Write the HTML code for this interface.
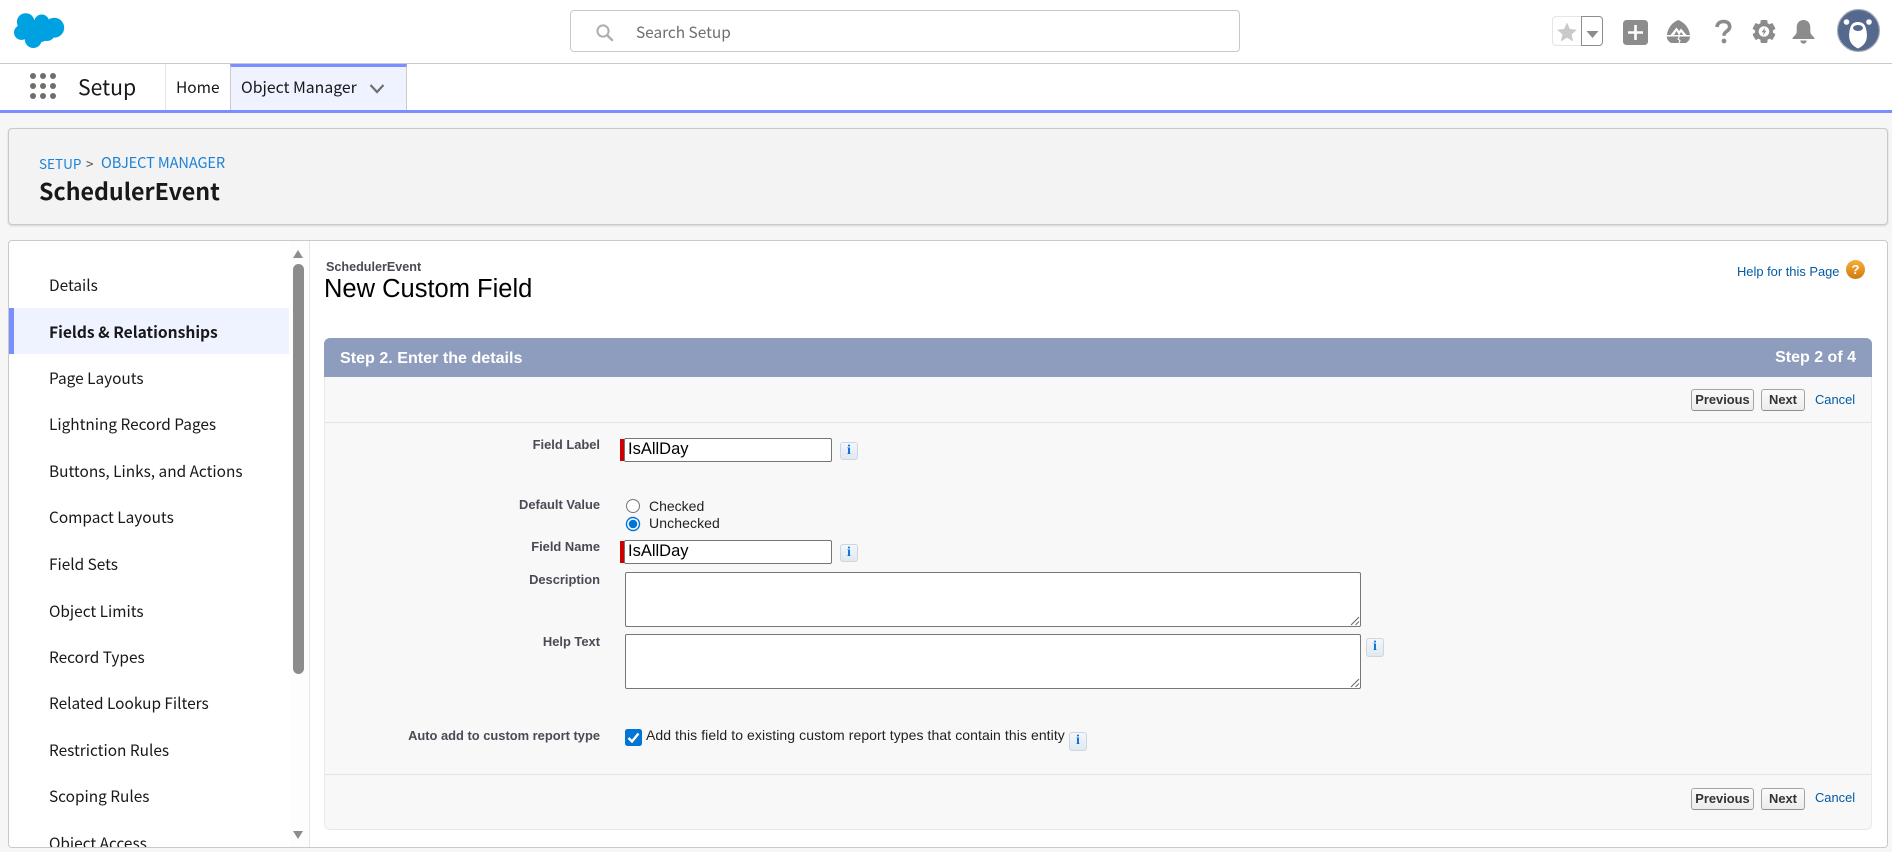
<!DOCTYPE html>
<html lang="en"><head><meta charset="utf-8"><title>SchedulerEvent - New Custom Field</title>
<style>
html,body{margin:0;padding:0;width:1892px;height:852px;overflow:hidden;background:#f6f6f6}
body{position:relative;font-family:"Liberation Sans",Arial,sans-serif}
.a{position:absolute;white-space:nowrap}
.n{font-family:"Noto Sans CJK SC","Liberation Sans",sans-serif}
.nv{left:49px;font-size:15.4px;line-height:24px;color:#181818;font-family:"Noto Sans CJK SC","Liberation Sans",sans-serif}
.lb{right:1292px;font-size:12.9px;line-height:16px;font-weight:bold;color:#4a4a56;text-align:right}
.inp{background:#fff;border:1px solid #767676;border-radius:2px;box-sizing:border-box}
.red{background:#c00;width:4px;height:22px;left:620px}
.tx{font-size:16.5px;line-height:20px;color:#000;left:628px}
.ib{box-sizing:border-box;width:18px;height:18px;background:linear-gradient(#f4f7fb,#dfe8f1);border:1px solid #cfd6dc;border-radius:3px;color:#0f74d8;font:bold 14px/16px "Liberation Serif",serif;text-align:center}
.btn{box-sizing:border-box;height:22px;background:linear-gradient(#fbfbfb,#ececec);border:1px solid #a5a5a5;border-bottom-color:#8f8f8f;border-radius:3px;font-size:12.9px;font-weight:bold;line-height:20px;color:#333;text-align:center}
.lnk{font-size:12.9px;line-height:16px;color:#015ba7}
.rt{font-size:14px;line-height:16px;color:#222}
</style></head><body>

<!-- top header -->
<div class="a" style="left:0;top:0;width:1892px;height:64px;background:#fff;border-bottom:1px solid #c9c9c9;box-sizing:border-box"></div>
<svg class="a" style="left:0;top:0" width="80" height="60" viewBox="0 0 80 60"><g fill="#00a1e0"><circle cx="25.7" cy="22" r="8.800"/><circle cx="41.7" cy="22" r="7.500"/><circle cx="54.3" cy="27.7" r="9.900"/><circle cx="33.3" cy="39.500" r="8.500"/><circle cx="21.500" cy="32.500" r="7.500"/><circle cx="37" cy="30" r="10"/><circle cx="46.7" cy="32" r="9"/><circle cx="29" cy="30" r="9"/><circle cx="41" cy="36" r="6"/></g></svg>

<div class="a" style="left:570px;top:10px;width:670px;height:42px;box-sizing:border-box;background:#fff;border:1px solid #c9c9c9;border-radius:4px"></div>
<svg class="a" style="left:595px;top:23px" width="19" height="19" viewBox="0 0 19 19"><circle cx="8" cy="8" r="5.6" fill="none" stroke="#b0adab" stroke-width="2"/><path d="M12 12l5 5" stroke="#b0adab" stroke-width="2.4" stroke-linecap="round"/></svg>
<div class="a n" style="left:636px;top:21px;font-size:15.4px;line-height:22px;color:#706e6b">Search Setup</div>

<!-- header icons -->
<div class="a" style="left:1552px;top:16px;width:30px;height:30px;box-sizing:border-box;border:1px solid #e5e5e5;border-right:0;border-radius:4px 0 0 4px;background:#fff"></div>
<div class="a" style="left:1581px;top:16px;width:22px;height:30px;box-sizing:border-box;border:1px solid #8c8c8c;border-radius:0 4px 4px 0;background:#fff"></div>
<svg class="a" style="left:1556px;top:21px" width="22" height="22" viewBox="0 0 22 22"><path d="M11 1.5l2.900 6.500 7 .7-5.300 4.700 1.600 7L11 16.800l-6.200 3.600 1.600-7L1.100 8.700l7-.7z" fill="#c9c9c9"/></svg>
<svg class="a" style="left:1586px;top:31px" width="13" height="7" viewBox="0 0 13 7"><path d="M.5 0h12l-6 7z" fill="#8c8c8c"/></svg>
<svg class="a" style="left:1623px;top:20px" width="25" height="25" viewBox="0 0 25 25"><rect width="25" height="25" rx="3.500" fill="#8c8c8c"/><path d="M12.500 5v15M5 12.500h15" stroke="#fff" stroke-width="2.600"/></svg>
<svg class="a" style="left:1666px;top:18px" width="25" height="26" viewBox="0 0 25 26"><path d="M12.300 2C7 4 2 9 .8 17H24C23 9 17.500 4 12.300 2z" fill="#8c8c8c"/><path d="M4.500 17l6-7.500 2.500 3.500 2-2.500 5.500 6.500z" fill="#fff"/><path d="M8 17l2.600-4 2.200 4zM13.500 17l1.500-3 2.200 3z" fill="#8c8c8c"/><path d="M.8 18.500H24c0 2.500-1 4.500-4 6.500H5c-3-2-4.200-4-4.200-6.500z" fill="#8c8c8c"/><path d="M13.500 18.500L12 21l2 1.500-1 2.500" fill="none" stroke="#fff" stroke-width="1.100"/></svg>
<svg class="a" style="left:1714px;top:19px" width="19" height="25" viewBox="0 0 19 25"><path d="M3 8C3.300 4.300 6 2.500 9.500 2.500c3.800 0 6.200 2.100 6.200 5.100 0 2.400-1.300 3.500-3 4.700-1.900 1.300-2.700 2.200-2.700 4.400" fill="none" stroke="#8c8c8c" stroke-width="3.600"/><circle cx="10" cy="22" r="2.400" fill="#8c8c8c"/></svg>
<svg class="a" style="left:1752px;top:19px" width="24" height="25" viewBox="0 0 24 25"><g fill="#8c8c8c"><circle cx="12" cy="12.500" r="9"/><rect x="8.500" y="1" width="7" height="23" rx="1.200"/><rect x="8.500" y="1" width="7" height="23" rx="1.200" transform="rotate(60 12 12.500)"/><rect x="8.500" y="1" width="7" height="23" rx="1.200" transform="rotate(120 12 12.500)"/></g><circle cx="12" cy="12.500" r="5.300" fill="#fff"/><path d="M13 8.500l-3.400 4.700h2.100l-.8 3.500 3.500-5h-2.100z" fill="#8c8c8c"/></svg>
<svg class="a" style="left:1791px;top:19px" width="25" height="25" viewBox="0 0 25 25"><path d="M12.500 1c4.300 0 6.800 3.200 6.800 7.500v4c0 3 2.500 4.300 4.200 6.500.3.500 0 1-.6 1H2.100c-.6 0-.9-.5-.6-1 1.700-2.200 4.200-3.500 4.200-6.500v-4C5.700 4.200 8.200 1 12.500 1z" fill="#8c8c8c"/><path d="M9.300 21.500h6.400a3.200 3.200 0 0 1-6.400 0z" fill="#8c8c8c"/></svg>
<svg class="a" style="left:1836px;top:8px" width="45" height="45" viewBox="0 0 45 45"><circle cx="22.500" cy="22.500" r="21" fill="#54698d" stroke="#a8aeb8" stroke-width="1.200"/><circle cx="10.500" cy="14" r="2.800" fill="#fff"/><circle cx="33" cy="14" r="2.800" fill="#fff"/><path d="M22 14c5.500 0 7.500 3 8.500 9 .9 6 1 13-8.500 17.500C12.500 36 12.600 29 13.500 23c1-6 3-9 8.500-9z" fill="#fff"/><ellipse cx="22" cy="20" rx="5" ry="3" fill="#54698d"/></svg>

<!-- nav bar -->
<div class="a" style="left:0;top:64px;width:1892px;height:46px;background:#fff"></div>
<div class="a" style="left:0;top:110px;width:1892px;height:3px;background:#7a8eff"></div>
<svg class="a" style="left:30px;top:73px" width="26" height="26" viewBox="0 0 26 26"><g fill="#706e6b"><circle cx="3" cy="3" r="3"/><circle cx="13" cy="3" r="3"/><circle cx="23" cy="3" r="3"/><circle cx="3" cy="13" r="3"/><circle cx="13" cy="13" r="3"/><circle cx="23" cy="13" r="3"/><circle cx="3" cy="23" r="3"/><circle cx="13" cy="23" r="3"/><circle cx="23" cy="23" r="3"/></g></svg>
<div class="a n" style="left:78px;top:71px;font-size:21.2px;line-height:32px;color:#181818">Setup</div>
<div class="a" style="left:165px;top:64px;width:1px;height:46px;background:#e5e5e5"></div>
<div class="a n" style="left:176px;top:75px;font-size:15.5px;line-height:24px;color:#181818">Home</div>
<div class="a" style="left:230px;top:64px;width:177px;height:46px;box-sizing:border-box;background:#eff2ff;border:1px solid #c9c9c9;border-top:3px solid #7a8eff;border-bottom:0"></div>
<div class="a n" style="left:241px;top:75px;font-size:15.8px;line-height:24px;color:#181818">Object Manager</div>
<svg class="a" style="left:369px;top:83px" width="16" height="11" viewBox="0 0 16 11"><path d="M1.500 2l6.500 7 6.500-7" fill="none" stroke="#706e6b" stroke-width="2.200"/></svg>

<!-- title card -->
<div class="a" style="left:8px;top:128px;width:1880px;height:97px;box-sizing:border-box;background:#f3f3f3;border:1px solid #c9c9c9;border-radius:4px;box-shadow:0 1px 2px rgba(0,0,0,.15)"></div>
<div class="a n" style="left:39px;top:152px;font-size:13.5px;line-height:22px;color:#1b82d6">SETUP</div>
<div class="a n" style="left:86px;top:152px;font-size:13.5px;line-height:22px;color:#555">&gt;</div>
<div class="a n" style="left:101px;top:152px;font-size:14.6px;line-height:22px;color:#1b82d6;letter-spacing:-.1px">OBJECT MANAGER</div>
<div class="a n" style="left:39px;top:172px;font-size:23.2px;line-height:36px;font-weight:700;color:#181818">SchedulerEvent</div>

<!-- main card -->
<div class="a" style="left:8px;top:240px;width:1880px;height:608px;box-sizing:border-box;background:#fff;border:1px solid #c9c9c9;border-radius:4px;overflow:hidden">
  <div class="a" style="left:299.500px;top:0;width:1px;height:606px;background:#e5e5e5"></div>
  <div class="a" style="left:0;top:67px;width:280px;height:46px;background:#eff2ff"></div>
  <div class="a" style="left:0;top:67px;width:5px;height:46px;background:#7a8eff"></div>
  <div class="a" style="left:281px;top:0;width:19px;height:606px;background:#fdfdfd"></div>
  <div class="a" style="left:284px;top:23px;width:11px;height:410px;background:#8c8c8c;border-radius:5.500px"></div>
  <div class="a" style="left:284px;top:9px;width:0;height:0;border:5.500px solid transparent;border-top:0;border-bottom:8px solid #8c8c8c"></div>
  <div class="a" style="left:284px;top:590px;width:0;height:0;border:5.500px solid transparent;border-bottom:0;border-top:8px solid #8c8c8c"></div>
  <div class="a nv" style="left:40px;top:32px">Details</div>
  <div class="a nv" style="left:40px;top:79px;font-weight:700;font-size:15.600px">Fields &amp; Relationships</div>
  <div class="a nv" style="left:40px;top:125px">Page Layouts</div>
  <div class="a nv" style="left:40px;top:171px">Lightning Record Pages</div>
  <div class="a nv" style="left:40px;top:218px">Buttons, Links, and Actions</div>
  <div class="a nv" style="left:40px;top:264px">Compact Layouts</div>
  <div class="a nv" style="left:40px;top:311px">Field Sets</div>
  <div class="a nv" style="left:40px;top:358px">Object Limits</div>
  <div class="a nv" style="left:40px;top:404px">Record Types</div>
  <div class="a nv" style="left:40px;top:450px">Related Lookup Filters</div>
  <div class="a nv" style="left:40px;top:497px">Restriction Rules</div>
  <div class="a nv" style="left:40px;top:543px">Scoping Rules</div>
  <div class="a nv" style="left:40px;top:590px">Object Access</div>
</div>

<!-- page title -->
<div class="a" style="left:326px;top:259px;font-size:12.600px;line-height:16px;font-weight:bold;color:#4a4a56">SchedulerEvent</div>
<div class="a" style="left:324px;top:274px;font-size:25.500px;line-height:30px;color:#000">New Custom Field</div>
<div class="a lnk" style="left:1737px;top:264px">Help for this Page</div>
<svg class="a" style="left:1845px;top:259px" width="21" height="21" viewBox="0 0 21 21"><defs><linearGradient id="g" x1="0" y1="0" x2="0" y2="1"><stop offset="0" stop-color="#f5b03a"/><stop offset="1" stop-color="#d17a0d"/></linearGradient></defs><circle cx="10.500" cy="10.500" r="9.500" fill="url(#g)"/><text x="10.500" y="15" font-family="Liberation Sans" font-weight="bold" font-size="13" text-anchor="middle" fill="#fff">?</text></svg>

<!-- panel -->
<div class="a" style="left:324px;top:338px;width:1548px;height:492px;box-sizing:border-box;background:#f8f8f8;border:1px solid #eaeaea;border-top:0;border-radius:6px"></div>
<div class="a" style="left:324px;top:338px;width:1548px;height:39px;background:#8e9dbe;border-radius:6px 6px 0 0"></div>
<div class="a" style="left:340px;top:348px;font-size:16.1px;line-height:20px;font-weight:bold;color:#fff">Step 2. Enter the details</div>
<div class="a" style="right:36px;top:348px;font-size:16px;line-height:20px;font-weight:bold;color:#fff">Step 2 of 4</div>
<div class="a" style="left:325px;top:422px;width:1546px;height:1px;background:#e3e3e3"></div>
<div class="a" style="left:325px;top:774px;width:1546px;height:1px;background:#e3e3e3"></div>

<div class="a btn" style="left:1691px;top:389px;width:63px">Previous</div>
<div class="a btn" style="left:1761px;top:389px;width:44px">Next</div>
<div class="a lnk" style="left:1815px;top:392px">Cancel</div>
<div class="a btn" style="left:1691px;top:788px;width:63px">Previous</div>
<div class="a btn" style="left:1761px;top:788px;width:44px">Next</div>
<div class="a lnk" style="left:1815px;top:790px">Cancel</div>

<!-- fields -->
<div class="a lb" style="top:437px">Field Label</div>
<div class="a red" style="top:439px"></div>
<div class="a inp" style="left:624px;top:438px;width:208px;height:24px"></div>
<div class="a tx" style="top:439px">IsAllDay</div>
<div class="a ib" style="left:840px;top:442px">i</div>

<div class="a lb" style="top:497px">Default Value</div>
<svg class="a" style="left:625px;top:498px" width="16" height="34" viewBox="0 0 16 34"><circle cx="8" cy="8" r="6.500" fill="#fff" stroke="#767676"/><circle cx="8" cy="26" r="6.500" fill="#fff" stroke="#0075d5" stroke-width="1.400"/><circle cx="8" cy="26" r="4.300" fill="#0075d5"/></svg>
<div class="a rt" style="left:649px;top:498px">Checked</div>
<div class="a rt" style="left:649px;top:515px;letter-spacing:.1px">Unchecked</div>

<div class="a lb" style="top:539px">Field Name</div>
<div class="a red" style="top:541px"></div>
<div class="a inp" style="left:624px;top:540px;width:208px;height:24px"></div>
<div class="a tx" style="top:541px">IsAllDay</div>
<div class="a ib" style="left:840px;top:544px">i</div>

<div class="a lb" style="top:572px">Description</div>
<div class="a inp" style="left:625px;top:572px;width:736px;height:55px"></div>
<svg class="a" style="left:1350px;top:616px" width="10" height="10" viewBox="0 0 10 10"><path d="M1 9l8-8M5.500 9L9 5.500" stroke="#666" stroke-width="1"/></svg>

<div class="a lb" style="top:634px">Help Text</div>
<div class="a inp" style="left:625px;top:634px;width:736px;height:55px"></div>
<svg class="a" style="left:1350px;top:678px" width="10" height="10" viewBox="0 0 10 10"><path d="M1 9l8-8M5.500 9L9 5.500" stroke="#666" stroke-width="1"/></svg>
<div class="a ib" style="left:1366px;top:638px;height:19px">i</div>

<div class="a lb" style="top:728px">Auto add to custom report type</div>
<svg class="a" style="left:625px;top:729px" width="17" height="17" viewBox="0 0 17 17"><rect width="17" height="17" rx="2.500" fill="#0075d5"/><path d="M3.500 9l3.500 3.500 6.500-8" fill="none" stroke="#fff" stroke-width="2.400"/></svg>
<div class="a rt" style="left:646px;top:727px;font-size:14px;letter-spacing:.08px">Add this field to existing custom report types that contain this entity</div>
<div class="a ib" style="left:1069px;top:732px;height:19px">i</div>

</body></html>
